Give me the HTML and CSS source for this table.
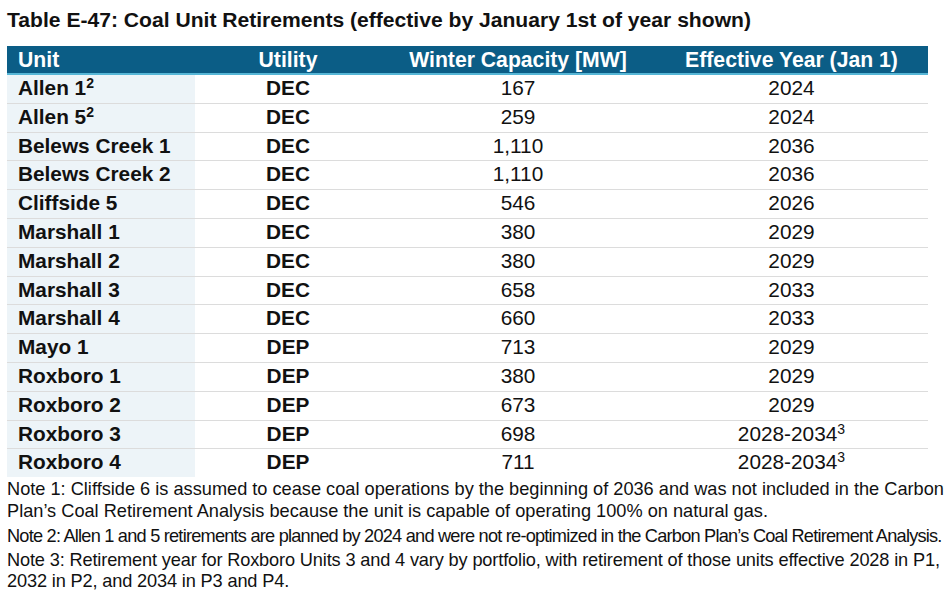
FILE: index.html
```html
<!DOCTYPE html>
<html>
<head>
<meta charset="utf-8">
<link rel="stylesheet" href="styles.css">
</head>
<body>
<div class="page">
  <h1 class="title">Table E-47: Coal Unit Retirements (effective by January 1st of year shown)</h1>
  <table class="grid">
    <colgroup>
      <col class="col-unit">
      <col class="col-util">
      <col class="col-cap">
      <col class="col-year">
    </colgroup>
    <thead>
      <tr><th class="c-unit">Unit</th><th>Utility</th><th>Winter Capacity [MW]</th><th>Effective Year (Jan 1)</th></tr>
    </thead>
    <tbody>
      <tr><td class="c-unit">Allen 1<sup>2</sup></td><td class="util">DEC</td><td>167</td><td>2024</td></tr>
      <tr><td class="c-unit">Allen 5<sup>2</sup></td><td class="util">DEC</td><td>259</td><td>2024</td></tr>
      <tr><td class="c-unit">Belews Creek 1</td><td class="util">DEC</td><td>1,110</td><td>2036</td></tr>
      <tr><td class="c-unit">Belews Creek 2</td><td class="util">DEC</td><td>1,110</td><td>2036</td></tr>
      <tr><td class="c-unit">Cliffside 5</td><td class="util">DEC</td><td>546</td><td>2026</td></tr>
      <tr><td class="c-unit">Marshall 1</td><td class="util">DEC</td><td>380</td><td>2029</td></tr>
      <tr><td class="c-unit">Marshall 2</td><td class="util">DEC</td><td>380</td><td>2029</td></tr>
      <tr><td class="c-unit">Marshall 3</td><td class="util">DEC</td><td>658</td><td>2033</td></tr>
      <tr><td class="c-unit">Marshall 4</td><td class="util">DEC</td><td>660</td><td>2033</td></tr>
      <tr><td class="c-unit">Mayo 1</td><td class="util">DEP</td><td>713</td><td>2029</td></tr>
      <tr><td class="c-unit">Roxboro 1</td><td class="util">DEP</td><td>380</td><td>2029</td></tr>
      <tr><td class="c-unit">Roxboro 2</td><td class="util">DEP</td><td>673</td><td>2029</td></tr>
      <tr><td class="c-unit">Roxboro 3</td><td class="util">DEP</td><td>698</td><td>2028-2034<sup class="thin">3</sup></td></tr>
      <tr><td class="c-unit">Roxboro 4</td><td class="util">DEP</td><td>711</td><td>2028-2034<sup class="thin">3</sup></td></tr>
    </tbody>
  </table>
  <div class="notes">
    <p class="note">Note 1: Cliffside 6 is assumed to cease coal operations by the beginning of 2036 and was not included in the Carbon Plan’s Coal Retirement Analysis because the unit is capable of operating 100% on natural gas.</p>
    <p class="note tight">Note 2: Allen 1 and 5 retirements are planned by 2024 and were not re-optimized in the Carbon Plan’s Coal Retirement Analysis.</p>
    <p class="note snug">Note 3: Retirement year for Roxboro Units 3 and 4 vary by portfolio, with retirement of those units effective 2028 in P1, 2032 in P2, and 2034 in P3 and P4.</p>
  </div>
</div>
</body>
</html>
```

FILE: styles.css
```css
html, body {
  margin: 0;
  padding: 0;
  background: #ffffff;
}
.page {
  padding: 6px 0 0 7px;
  width: 942px;
  font-family: "Liberation Sans", Arial, sans-serif;
  color: #111111;
}
.title {
  margin: 0;
  font-size: 21.1px;
  font-weight: bold;
  line-height: 28px;
  height: 40px;
}
.grid {
  border-collapse: collapse;
  width: 921px;
  table-layout: fixed;
  font-size: 20.8px;
}
.col-unit { width: 188px; }
.col-util { width: 186px; }
.col-cap { width: 274px; }
.col-year { width: 273px; }
.grid th {
  background: #0b5d86;
  color: #ffffff;
  font-weight: bold;
  font-size: 21.2px;
  height: 27px;
  padding: 0;
  line-height: 27px;
  text-align: center;
  border-bottom: 2px solid #56b6d6;
}
.grid th.c-unit {
  text-align: left;
  padding-left: 11px;
}
.grid td {
  height: 26px;
  padding: 0 0 1.8px 0;
  line-height: 26px;
  text-align: center;
  border-bottom: 1px solid #dcdcdc;
}
.grid tbody tr:last-child td {
  border-bottom: none;
}
.grid td.c-unit {
  text-align: left;
  padding-left: 11px;
  font-weight: bold;
  background: #edf4f8;
}
.grid td.util {
  font-weight: bold;
}
.grid sup {
  font-size: 14px;
  line-height: 0;
  vertical-align: 7px;
}
.notes {
  width: 942px;
  padding-top: 1px;
  font-size: 18.2px;
  line-height: 22px;
}
.note {
  margin: 0 0 3px 0;
}
.note.tight {
  letter-spacing: -0.78px;
  white-space: nowrap;
}
.note.snug {
  letter-spacing: -0.15px;
  line-height: 21px;
}
```
